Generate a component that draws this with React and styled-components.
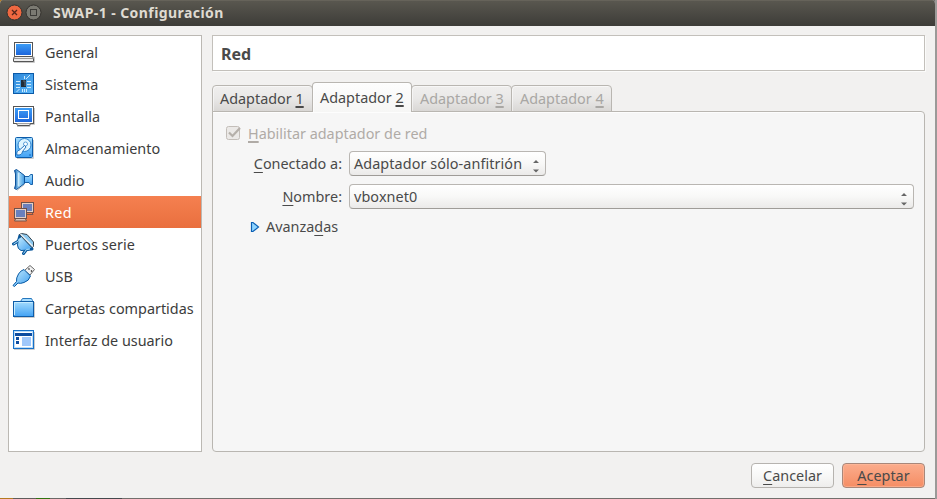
import React from "react";
import styled, { createGlobalStyle, css } from "styled-components";

const GlobalStyle = createGlobalStyle`
  * { box-sizing: border-box; }
  body { margin: 0; background: #7d7b78; overflow: hidden; }
`;

const Desktop = styled.div`
  width: 937px;
  height: 499px;
  background:
    linear-gradient(90deg, #9b9a98, #9b9a98) 935px 0 / 2px 499px no-repeat,
    linear-gradient(90deg, #b47a20 0 13px, #5f5d5b 13px 36px, #2f7410 36px 50px, #6b6966 50px 66px, #45494d 66px 122px, #726f6c 122px);
  font-family: "Noto Sans", "Open Sans", sans-serif;
  font-size: 14.4px;
  line-height: 20px;
  color: #4a4a4a;
  white-space: nowrap;
`;
const Window = styled.div`
  width: 935px;
  height: 498px;
  display: flex;
  flex-direction: column;
  background: #f2f1f0;
  border-radius: 4px 4px 0 0;
  overflow: hidden;
`;
const TitleBar = styled.header`
  height: 26px;
  flex: none;
  display: flex;
  align-items: center;
  padding: 0 0 1px 6px;
  background: linear-gradient(#5a5850, #3d3c38);
  box-shadow: inset 0 1px #66635a;
  color: #dfdbd2;
`;
const WindowButton = styled.svg`
  width: 17px;
  height: 17px;
  margin-right: 2px;
  flex: none;
`;
const Title = styled.h1`
  margin: 0 0 0 9px;
  font-size: 14px;
  font-weight: 700;
  letter-spacing: 0.43px;
`;
const Body = styled.main`
  flex: none;
  display: grid;
  grid-template-columns: 194px 713px;
  column-gap: 10px;
  height: 426px;
  padding: 9px 0 0 8px;
`;
const Sidebar = styled.nav`
  height: 417px;
  border: 1px solid #bbb8b3;
  background: #fff;
`;
const NavItem = styled.div`
  height: 32px;
  display: flex;
  align-items: center;
  padding-left: 3px;
  color: ${(p) => (p.$active ? "#fff" : "#3c3c3c")};
  background: ${(p) => (p.$active ? "linear-gradient(#f58050, #e96f3e)" : "transparent")};
`;
const NavIcon = styled.svg`
  width: 24px;
  height: 32px;
  margin-right: 9px;
  flex: none;
`;
const NavLabel = styled.span`
  padding-top: 2px;
  letter-spacing: ${(p) => p.$ls}px;
`;
const Text = styled.span`
  letter-spacing: ${(p) => p.$ls || 0}px;
`;
const Key = styled.span`
  text-decoration: underline;
  text-decoration-thickness: ${(p) => p.$thick || 1}px;
  text-underline-offset: ${(p) => (p.$thick ? 2 : 3)}px;
  text-decoration-skip-ink: none;
`;
const Content = styled.section`
  display: flex;
  flex-direction: column;
`;
const PageTitle = styled.h2`
  margin: 0;
  height: 36px;
  flex: none;
  padding: 8px 8px;
  border: 1px solid #c3c0bb;
  background: #fff;
  box-shadow: 1px 1px #fbfbfa;
  font-size: 16px;
  line-height: 20px;
`;
const Tabs = styled.div`
  display: flex;
  align-items: flex-end;
  height: 30px;
  margin-top: 11px;
  z-index: 1;
`;
const Tab = styled.div`
  width: 101px;
  height: 27px;
  margin-right: -1px;
  padding: 3px 0 0 ${(p) => (p.$disabled ? 8 : 7)}px;
  border: 1px solid #b9b6b1;
  border-radius: 4px 4px 0 0;
  background: linear-gradient(#f0efee, #e9e8e7 50%, #d9d7d5);
  color: ${(p) => (p.$disabled ? "#a9a7a4" : "#4a4a4a")};
  box-shadow: inset 1px 1px rgba(255, 255, 255, 0.5);
  ${(p) =>
    p.$active &&
    css`
      width: 100px;
      height: 30px;
      padding-top: 5px;
      border-bottom: 0;
      background: linear-gradient(#fdfdfd, #f6f6f5);
      z-index: 1;
    `}
`;
const Pane = styled.div`
  height: 341px;
  margin-top: -1px;
  flex: none;
  padding: 10px 0 0 12px;
  border: 1px solid #b9b6b1;
  border-radius: 0 4px 4px 4px;
  background: #f6f6f6;
  box-shadow: inset 0 1px #fdfdfd;
`;
const CheckRow = styled.label`
  height: 24px;
  display: flex;
  align-items: center;
  gap: 6px;
  color: #b0aba6;
`;
const CheckIcon = styled.svg`
  width: 17px;
  height: 17px;
  margin-top: -3px;
`;
const Field = styled.div`
  display: flex;
  align-items: center;
  height: 25px;
  margin-bottom: 8px;
`;
const FieldLabel = styled.div`
  width: 117px;
  margin-right: 7px;
  text-align: right;
`;
const Fields = styled.div`
  padding-top: 5px;
`;
const Select = styled.div`
  width: ${(p) => p.$width}px;
  height: 25px;
  display: flex;
  align-items: center;
  justify-content: space-between;
  padding: 0 3px 0 4px;
  border: 1px solid #b9b6b2;
  border-bottom-color: #9f9c98;
  border-radius: 4px;
  background: linear-gradient(#ffffff, #f8f8f7 50%, #ebeae9);
`;
const Spinner = styled.svg`
  width: 12px;
  height: 19px;
  margin-top: 2px;
`;
const Advanced = styled.div`
  display: flex;
  align-items: center;
  height: 20px;
  padding-left: 25px;
  gap: 6px;
`;
const Triangle = styled.svg`
  width: 10px;
  height: 12px;
  margin-top: -1px;
`;
const Actions = styled.footer`
  display: flex;
  justify-content: flex-end;
  gap: 8px;
  padding: 11px 10px 0 0;
`;
const Button = styled.button`
  width: 83px;
  height: 25px;
  padding: 0;
  font: inherit;
  line-height: 23px;
  color: #4a4a4a;
  border: 1px solid ${(p) => (p.$primary ? "#a8877a" : "#b6b3af")};
  border-radius: 4px;
  background: ${(p) =>
    p.$primary ? "linear-gradient(#fbac8c, #f58d64)" : "linear-gradient(#ffffff, #f8f8f7 50%, #eeedec)"};
  box-shadow: ${(p) => (p.$primary ? "inset 0 0 0 1px rgba(255,190,160,.55)" : "none")};
`;

const Defs = () => (
  <defs>
    <linearGradient id="blue" x1="0" y1="0" x2="0" y2="1">
      <stop offset="0" stopColor="#3d9df5" />
      <stop offset="1" stopColor="#1d66dc" />
    </linearGradient>
    <linearGradient id="light" x1="0" y1="0" x2="1" y2="1">
      <stop offset="0" stopColor="#c4ecff" />
      <stop offset="1" stopColor="#3d9dee" />
    </linearGradient>
    <linearGradient id="folder" x1="0" y1="0" x2="0" y2="1">
      <stop offset="0" stopColor="#a4dcfd" />
      <stop offset="1" stopColor="#42a2f4" />
    </linearGradient>
    <linearGradient id="board" x1="0" y1="0" x2="1" y2="1">
      <stop offset="0" stopColor="#2b86d8" />
      <stop offset="1" stopColor="#5cb8fa" />
    </linearGradient>
    <linearGradient id="cone" x1="0" y1="0" x2="1" y2="0">
      <stop offset="0" stopColor="#1667b5" />
      <stop offset=".45" stopColor="#a4daf9" />
      <stop offset="1" stopColor="#3f97de" />
    </linearGradient>
  </defs>
);

const icons = {
  general: (
    <>
      <path d="M3 21H22.5V26.500H2" stroke="#c9c9c9" fill="none" />
      <rect x="2.5" y="6.5" width="18" height="14" fill="#fff" stroke="#555" />
      <rect x="4" y="8" width="15" height="11" fill="url(#blue)" />
      <path d="M2.500 20.500H20.500L21.500 22.500V25.500H1.500V22.500Z" fill="#eee" stroke="#555" />
      <path d="M2 22.500H21" stroke="#999" />
    </>
  ),
  system: (
    <>
      <rect x="1.500" y="5.500" width="20" height="20" fill="url(#board)" stroke="#0b5aa8" />
      <path d="M4 13.500h4M4 16.500h4M4 19.500h4M15 13.500h4M15 16.500h4M15 19.500h4M10.500 21v3M12.500 21v3M14.500 21v3M12.500 8v3M14 11l4-4M4.500 24l3-3" stroke="#dcf3ff" strokeWidth=".9" fill="none" />
      <rect x="9" y="12" width="5" height="7" fill="#202c38" />
      <path d="M11 13h2v5" stroke="#596b7a" fill="none" />
    </>
  ),
  display: (
    <>
      <path d="M22.500 8V24.500H18V26.500H5" stroke="#c7c7c7" fill="none" />
      <rect x="1.500" y="6.500" width="20" height="17" fill="#fff" stroke="#555" />
      <rect x="3" y="8" width="17" height="14" fill="url(#blue)" />
      <rect x="6.500" y="10.500" width="10" height="8" fill="none" stroke="#fff" />
      <path d="M4.500 23.500L5.500 25.500H17.500L18.500 23.500" fill="#eee" stroke="#555" />
    </>
  ),
  storage: (
    <>
      <path d="M5 26.500H21.500V8" stroke="#ccc" fill="none" />
      <rect x="3.500" y="5.500" width="17" height="20" rx="1" fill="url(#folder)" stroke="#0c5caa" />
      <circle cx="12.500" cy="13" r="6.500" fill="#dff5ff" stroke="#2b80cc" />
      <circle cx="13.500" cy="12" r="2" fill="#fff" stroke="#5b9fd8" />
      <path d="M5 23Q4 19 7.500 18L12.500 13.500L14 15L10.500 19.500Q10 23.500 5 23Z" fill="#eef9ff" stroke="#1769b7" strokeWidth=".9" />
      <circle cx="18" cy="23" r=".8" fill="#125fac" />
    </>
  ),
  audio: (
    <>
      <path d="M5 26.500L12.500 20.500" stroke="#c8c8c8" fill="none" />
      <path d="M12.500 12.500H17L18.500 10.500H20.500V20.500H18.500L17 18.500H12.500Z" fill="url(#folder)" stroke="#1761a9" />
      <path d="M2.500 6.500L4.500 5.500L12.500 11.500V19.500L4.500 25.500L2.500 24.500L3.500 21V10Z" fill="url(#cone)" stroke="#0d529a" />
      <path d="M6.500 9V22" stroke="#d9f2ff" strokeWidth="1.500" opacity=".8" />
    </>
  ),
  network: (
    <>
      <rect x="9.500" y="6.500" width="12" height="10" fill="#e4cfc6" stroke="#6f514c" />
      <rect x="11" y="8" width="9" height="7" fill="#6b80bd" />
      <path d="M15 18.500h6L20 16.500" stroke="#805448" fill="none" />
      <rect x="2.500" y="12.500" width="12" height="10" fill="#e4cfc6" stroke="#6f514c" />
      <rect x="4" y="14" width="9" height="7" fill="#6980be" />
      <path d="M3.500 23L2.500 25H14.500L13.500 23" fill="#dcc2b6" stroke="#76544a" />
    </>
  ),
  serial: (
    <>
      <path d="M8 7.500L6.500 13L1.500 16" stroke="#07559a" strokeWidth="3" fill="none" strokeLinecap="round" />
      <path d="M20 21L14.500 21.500L11.500 25.500" stroke="#07559a" strokeWidth="3" fill="none" strokeLinecap="round" />
      <path d="M9.500 8.500L20 19.500L16.500 22L9 22.500Q5.500 21 5.500 17L6.500 10.500Z" fill="url(#light)" stroke="#07559a" />
      <path d="M7 11L6.500 13L1.500 16M18 21L14.500 21.500L11.500 25.500" stroke="#a9defc" fill="none" />
      <path d="M7.500 6.500L9.500 5.500L15 6.500L21.500 14V18.500L20 19.500Z" fill="#8cc9f0" stroke="#34424d" />
      <path d="M8.500 6L21 18.500" stroke="#e9edf0" strokeWidth="1.200" />
    </>
  ),
  usb: (
    <>
      <path d="M12.500 10.500L18 5.500L22.500 9.500L18 15Z" fill="#f2f2f2" stroke="#666" />
      <path d="M16.500 8.500l1 1M19 10.500l1 1" stroke="#222" strokeWidth="1.300" />
      <path d="M12 9.500L18.500 16Q17 21 12 22.500Q8 24 6 23L2.500 26.500L1 25.500L4.500 21.500Q4 18 6.500 14Q8.500 10.500 12 9.500Z" fill="url(#light)" stroke="#075aa5" />
    </>
  ),
  folders: (
    <>
      <path d="M2 25.500H22.500V10" stroke="#ccc" fill="none" />
      <path d="M8.500 9.500L10.500 6.500H19.500L20.500 8.500V10" fill="#a8ddff" stroke="#2677bd" />
      <rect x="1.500" y="9.500" width="20" height="15" fill="url(#folder)" stroke="#0e5ca8" />
      <path d="M2.500 23V10.500H20.500" stroke="#c6ecff" fill="none" />
    </>
  ),
  ui: (
    <>
      <path d="M2 25.500H22.500V8" stroke="#ccc" fill="none" />
      <rect x="1.500" y="6.500" width="20" height="18" fill="#fff" stroke="#1670c8" />
      <rect x="2.500" y="7.500" width="18" height="16" fill="none" stroke="#b8dcfb" />
      <rect x="3" y="9" width="17" height="3" fill="#0c4ca0" />
      <path d="M4 13h3v3H4zM4 17h3v3H4z" fill="#0c4ca0" />
      <rect x="10" y="13" width="9" height="9" fill="#a0c8fb" />
    </>
  ),
};

const items = [
  ["general", "General", 0],
  ["system", "Sistema", 0],
  ["display", "Pantalla", 0.1],
  ["storage", "Almacenamiento", 0.06],
  ["audio", "Audio", 0],
  ["network", "Red", 0.3],
  ["serial", "Puertos serie", 0.08],
  ["usb", "USB", 0],
  ["folders", "Carpetas compartidas", 0],
  ["ui", "Interfaz de usuario", -0.03],
];

const Arrows = () => (
  <Spinner viewBox="0 0 12 19">
    <path d="M3 8L6 5L9 8ZM3 14.500L6 17.500L9 14.500Z" fill="#666" />
  </Spinner>
);

export default function App() {
  return (
    <Desktop>
      <GlobalStyle />
      <Window>
        <TitleBar>
          <WindowButton viewBox="0 0 17 17">
            <circle cx="8.500" cy="8.500" r="7.500" fill="#ee6841" stroke="#35332f" />
            <path d="M6 6l5 5M11 6l-5 5" stroke="#54261b" strokeWidth="1.300" />
          </WindowButton>
          <WindowButton viewBox="0 0 17 17">
            <circle cx="8.500" cy="8.500" r="7.500" fill="#7b7a72" stroke="#35332f" />
            <rect x="5.500" y="5.500" width="6" height="6" fill="none" stroke="#3c3b37" />
          </WindowButton>
          <Title>SWAP-1 - Configuración</Title>
        </TitleBar>
        <Body>
          <Sidebar>
            {items.map(([id, label, ls]) => (
              <NavItem key={id} $active={id === "network"}>
                <NavIcon viewBox="0 0 24 32">
                  <Defs />
                  {icons[id]}
                </NavIcon>
                <NavLabel $ls={ls}>{label}</NavLabel>
              </NavItem>
            ))}
          </Sidebar>
          <Content>
            <PageTitle>Red</PageTitle>
            <Tabs>
              {[1, 2, 3, 4].map((n) => (
                <Tab key={n} $active={n === 2} $disabled={n > 2}>
                  <Text>
                    Adaptador <Key $thick={2}>{n}</Key>
                  </Text>
                </Tab>
              ))}
            </Tabs>
            <Pane>
              <CheckRow>
                <CheckIcon viewBox="0 0 17 17">
                  <rect x="1.500" y="2.500" width="13" height="13" rx="2" fill="#ebe9e7" stroke="#c3beb9" />
                  <path d="M4 8.500L7.500 12L15 4" fill="none" stroke="#b5b0aa" strokeWidth="2.200" />
                </CheckIcon>
                <Text>
                  <Key $thick={2}>H</Key>abilitar adaptador de red
                </Text>
              </CheckRow>
              <Fields>
                <Field>
                  <FieldLabel>
                    <Text>
                      <Key>C</Key>onectado a:
                    </Text>
                  </FieldLabel>
                  <Select $width={197}>
                    <Text $ls={0.08}>Adaptador sólo-anfitrión</Text>
                    <Arrows />
                  </Select>
                </Field>
                <Field>
                  <FieldLabel>
                    <Text>
                      <Key>N</Key>ombre:
                    </Text>
                  </FieldLabel>
                  <Select $width={565}>
                    <Text $ls={0.1}>vboxnet0</Text>
                    <Arrows />
                  </Select>
                </Field>
              </Fields>
              <Advanced>
                <Triangle viewBox="0 0 10 12">
                  <path d="M1.500 1.500H3L8.500 6L3 10.500H1.500Z" fill="#8ed4ff" stroke="#0b5fb4" strokeWidth="1.200" />
                </Triangle>
                <Text>
                  Avanza<Key>d</Key>as
                </Text>
              </Advanced>
            </Pane>
          </Content>
        </Body>
        <Actions>
          <Button>
            <Text>
              <Key>C</Key>ancelar
            </Text>
          </Button>
          <Button $primary>
            <Text>
              <Key>A</Key>ceptar
            </Text>
          </Button>
        </Actions>
      </Window>
    </Desktop>
  );
}
